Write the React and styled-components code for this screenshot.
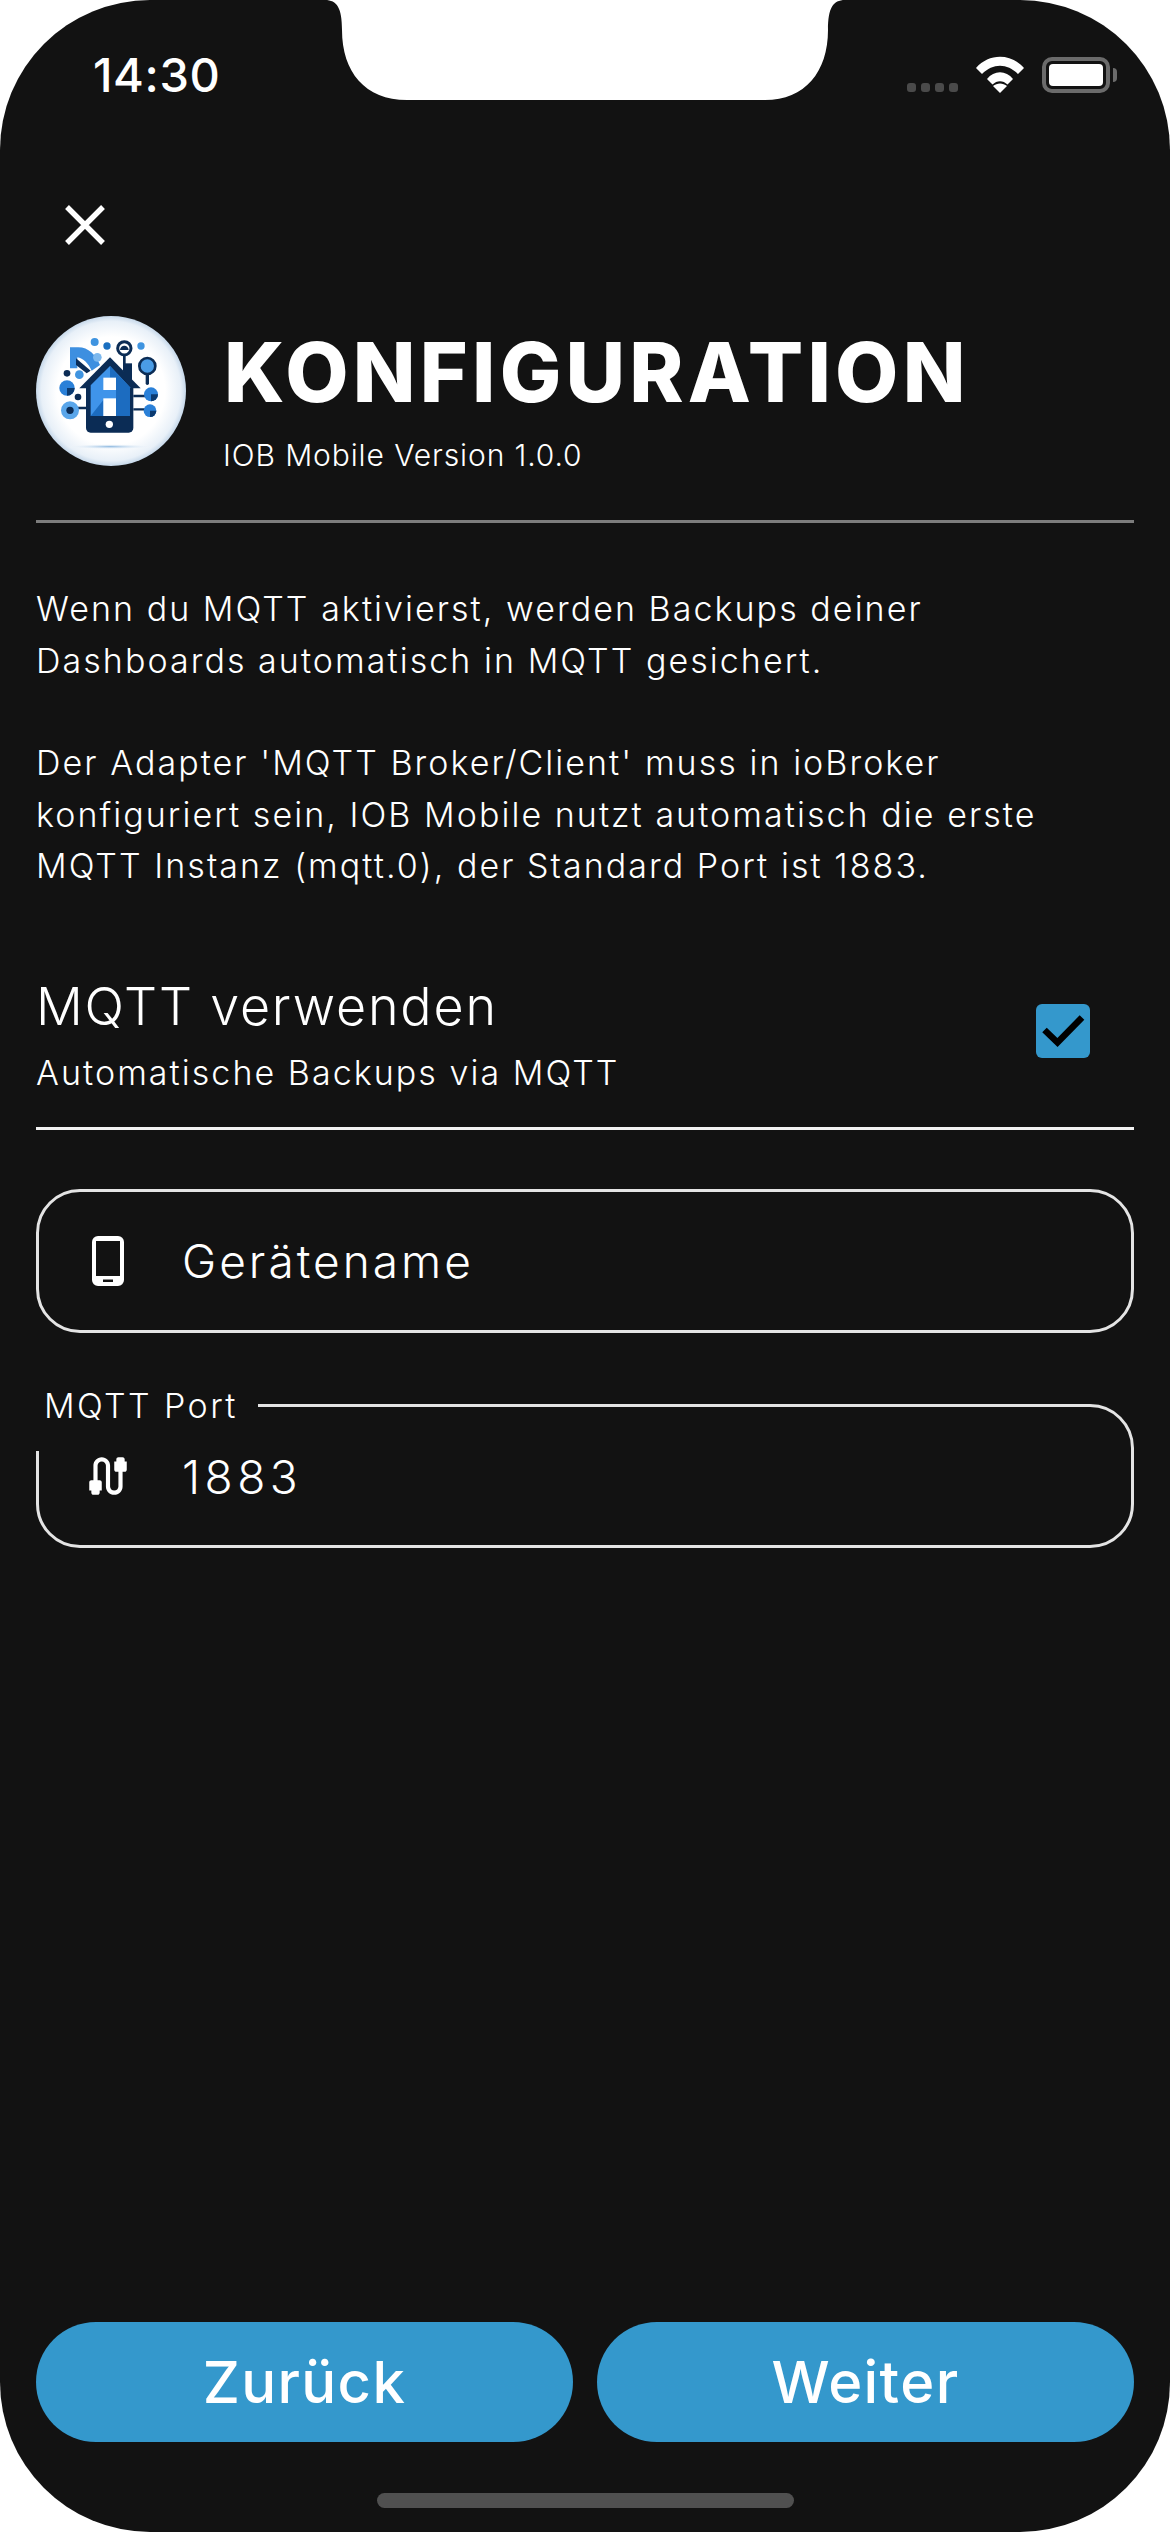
import styled, { createGlobalStyle } from 'styled-components';
import { MdCable } from 'react-icons/md';

const GlobalStyle = createGlobalStyle`
  html, body {
    margin: 0;
    padding: 0;
    background: #fff;
  }
  * {
    box-sizing: border-box;
  }
`;

const Screen = styled.div`
  position: relative;
  width: 1170px;
  height: 2532px;
  display: flex;
  flex-direction: column;
  overflow: hidden;
  border-radius: 150px;
  background: #121212;
  color: #fff;
  font-family: Inter, "Liberation Sans", sans-serif;
`;

const Notch = styled.svg`
  position: absolute;
  top: 0;
  left: 325px;
`;

const StatusBar = styled.div`
  height: 184px;
  flex: none;
  display: flex;
  justify-content: space-between;
  align-items: flex-start;
  padding: 50px 60px 0 93px;
`;

const Time = styled.span`
  font-size: 47px;
  font-weight: 500;
  line-height: 50px;
  letter-spacing: 0.6px;
`;

const StatusIcons = styled.div`
  display: flex;
  align-items: flex-end;
  gap: 17px;
  height: 40px;
  margin-top: 3px;
`;

const Dots = styled.div`
  display: flex;
  gap: 5px;
  margin-bottom: 1px;
`;

const Dot = styled.i`
  width: 9px;
  height: 9px;
  border-radius: 3px;
  background: #4a4a4a;
`;

const Battery = styled.div`
  position: relative;
  width: 68px;
  height: 36px;
  padding: 3px;
  border: 4px solid #6b6b6b;
  border-radius: 10px;
  &::before {
    content: '';
    display: block;
    height: 100%;
    border-radius: 4px;
    background: #fff;
  }
  &::after {
    content: '';
    position: absolute;
    right: -11px;
    top: 7px;
    width: 4px;
    height: 14px;
    border-radius: 0 4px 4px 0;
    background: #6b6b6b;
  }
`;

const Content = styled.div`
  flex: 1;
  display: flex;
  flex-direction: column;
  padding: 0 36px;
`;

const CloseButton = styled.button`
  width: 60px;
  height: 60px;
  margin: 11px 0 0 19px;
  padding: 0;
  flex: none;
  display: flex;
  align-items: center;
  justify-content: center;
  background: none;
  border: 0;
`;

const Header = styled.header`
  display: flex;
  align-items: flex-start;
  gap: 38px;
  margin-top: 61px;
  padding-bottom: 47px;
  border-bottom: 3px solid #7d7d7d;
`;

const TitleBlock = styled.div`
  display: flex;
  flex-direction: column;
`;

const Title = styled.h1`
  margin: 7px 0 0;
  font-size: 82px;
  font-weight: 800;
  line-height: 100px;
  letter-spacing: 4.2px;
`;

const Version = styled.p`
  margin: 14px 0 0 -1px;
  font-size: 30px;
  font-weight: 300;
  line-height: 36px;
  letter-spacing: 0.9px;
`;

const Paragraph = styled.p`
  margin: ${p => (p.$first ? '60px' : '51px')} 0 0;
  font-size: 34px;
  font-weight: 300;
  line-height: 51.6px;
  letter-spacing: 2.05px;
`;

const ToggleRow = styled.div`
  display: flex;
  align-items: center;
  justify-content: space-between;
  margin-top: 83px;
  padding: 0 44px 33px 0;
  border-bottom: 3px solid #f2f2f2;
`;

const ToggleName = styled.div`
  font-size: 52px;
  font-weight: 300;
  line-height: 64px;
  letter-spacing: 1.8px;
`;

const ToggleHint = styled.div`
  margin-top: 13px;
  font-size: 34px;
  font-weight: 300;
  line-height: 42px;
  letter-spacing: 2.05px;
`;

const Checkbox = styled.div`
  width: 54px;
  height: 54px;
  flex: none;
  margin-bottom: 6px;
  border-radius: 6px;
  background: #3498cc;
`;

const Field = styled.div`
  position: relative;
  height: 144px;
  margin-top: ${p => (p.$label ? '71px' : '59px')};
  display: flex;
  align-items: center;
  padding-left: 46px;
  border: 3px solid #e4e4e4;
  border-radius: 44px;
`;

const FieldLabel = styled.label`
  position: absolute;
  left: -3px;
  top: -46px;
  width: 222px;
  height: 90px;
  padding-left: 8px;
  font-size: 34px;
  font-weight: 300;
  line-height: 90px;
  letter-spacing: 2.4px;
  background: #121212;
`;

const FieldIcon = styled.span`
  width: 50px;
  flex: none;
  display: flex;
  justify-content: center;
  margin-left: -2px;
`;

const FieldValue = styled.span`
  margin: ${p => (p.$label ? '2px 0 0 49px' : '0 0 0 49px')};
  font-size: 46px;
  font-weight: 300;
  letter-spacing: ${p => (p.$label ? '4.5px' : '3px')};
`;

const Actions = styled.div`
  margin-top: auto;
  display: grid;
  grid-template-columns: 1fr 1fr;
  gap: 24px;
  padding-bottom: 90px;
`;

const ActionButton = styled.button`
  height: 120px;
  border: 0;
  border-radius: 60px;
  background: #3498cc;
  color: #fff;
  font-family: inherit;
  font-size: 58px;
  font-weight: 450;
  letter-spacing: 1.4px;
`;

const HomeBar = styled.div`
  position: absolute;
  left: 377px;
  bottom: 24px;
  width: 417px;
  height: 15px;
  border-radius: 8px;
  background: #505050;
`;

const Wifi = () => (
  <svg width="50" height="38" viewBox="0 0 50 38">
    <path d="M1 13 C14 -2 36 -2 49 13 L43 19 C32 8 18 8 7 19 Z" fill="#fff" />
    <path d="M12 24 C19 15 31 15 38 24 L32.5 29.5 C28 25 22 25 17.5 29.5 Z" fill="#fff" />
    <path d="M25 38 L18 31 C22 27.5 28 27.5 32 31 Z" fill="#fff" />
  </svg>
);

const CloseIcon = () => (
  <svg width="44" height="44" viewBox="0 0 44 44">
    <path d="M4 4 L40 40 M40 4 L4 40" stroke="#fff" strokeWidth="5.4" fill="none" />
  </svg>
);

const CheckIcon = () => (
  <svg width="54" height="54" viewBox="0 0 54 54">
    <path d="M8.5 26 L21.5 38.5 L46 13.5" stroke="#000" strokeWidth="6.5" fill="none" />
  </svg>
);

const PhoneIcon = () => (
  <svg width="32" height="50" viewBox="0 0 32 50">
    <path
      fillRule="evenodd"
      fill="#fff"
      d="M6 0 H26 A6 6 0 0 1 32 6 V44 A6 6 0 0 1 26 50 H6 A6 6 0 0 1 0 44 V6 A6 6 0 0 1 6 0 Z M4 5 V40 H28 V5 Z M11 43.5 V46 H21 V43.5 Z"
    />
  </svg>
);

// mapped 1:1 from the zoomed crop, hence the odd viewBox
const Logo = () => (
  <svg width="150" height="150" viewBox="48 48 450 450" style={{ flex: 'none' }}>
    <defs>
      <radialGradient id="logoBg">
        <stop offset="0.72" stopColor="#ffffff" />
        <stop offset="0.93" stopColor="#e8f0f8" />
        <stop offset="1" stopColor="#c6d8ea" />
      </radialGradient>
      <radialGradient id="logoShadow">
        <stop offset="0" stopColor="#8db8e0" />
        <stop offset="1" stopColor="#ffffff" stopOpacity="0" />
      </radialGradient>
    </defs>
    <circle cx="273" cy="273" r="225" fill="url(#logoBg)" />
    <ellipse cx="270" cy="440" rx="135" ry="8" fill="url(#logoShadow)" />
    <path d="M150 142 H175 C205 142 228 165 240 195 L215 212 C205 190 190 175 172 172 V205 H150 Z" fill="#3d8fe0" />
    <path d="M168 175 L212 212 L200 220 L168 195 Z" fill="#0b2c55" />
    <circle cx="232" cy="172" r="13" fill="#7cb8ee" />
    <circle cx="224" cy="126" r="12" fill="#3f94e0" />
    <circle cx="261" cy="138" r="11" fill="#1a6fc0" />
    <circle cx="363" cy="138" r="11" fill="#3f94e0" />
    <circle cx="141" cy="220" r="10" fill="#0b2c55" />
    <circle cx="178" cy="224" r="13" fill="#3f94e0" />
    <circle cx="141" cy="264" r="23" fill="#2a80d8" />
    <path d="M141 264 V287 A23 23 0 0 0 164 264 Z" fill="#0b3a70" />
    <circle cx="174" cy="291" r="10" fill="#0b2c55" />
    <path d="M170 324 H205 M340 288 H380 M340 328 H380" stroke="#0b2c55" strokeWidth="7" />
    <circle cx="150" cy="331" r="27" fill="#5aa6ea" />
    <circle cx="150" cy="331" r="11" fill="#0b2c55" />
    <circle cx="393" cy="283" r="21" fill="#2a80d8" />
    <path d="M393 283 H414 A21 21 0 0 1 393 304 Z" fill="#0b3a70" />
    <circle cx="390" cy="332" r="19" fill="#2a80d8" />
    <path d="M390 332 H409 A19 19 0 0 1 390 351 Z" fill="#0b3a70" />
    <path d="M382 225 V250" stroke="#0b2c55" strokeWidth="10" strokeLinecap="round" />
    <circle cx="382" cy="198" r="24" fill="#4a9ce6" stroke="#0b2c55" strokeWidth="8" />
    <path d="M313 165 V215" stroke="#0b2c55" strokeWidth="8" />
    <circle cx="313" cy="145" r="20" fill="#fff" stroke="#0b2c55" strokeWidth="9" />
    <path d="M300 150 A13 13 0 0 1 326 150 Z" fill="#0b2c55" />
    <rect x="312" y="190" width="24" height="50" fill="#0b2c55" />
    <rect x="198" y="250" width="142" height="148" rx="14" fill="#0b2c55" />
    <path d="M270 172 L362 265 H178 Z" fill="#0b2c55" />
    <path d="M270 198 L330 262 V348 H212 V256 Z" fill="#3f94ea" />
    <path d="M270 198 L330 262 V348 H288 V233 H270 Z" fill="#1c6cc0" />
    <path d="M212 348 L250 300 V348 Z" fill="#1c6cc0" />
    <rect x="250" y="233" width="38" height="37" fill="#fff" />
    <rect x="250" y="295" width="38" height="53" fill="#fff" />
    <circle cx="268" cy="373" r="11" fill="#fff" />
  </svg>
);

const App = () => (
  <Screen>
    <GlobalStyle />
    <Notch width="520" height="100" viewBox="0 0 520 100">
      <path
        d="M0 0 C12 0 17 8 17 30 C17 72 40 100 82 100 H440 C480 100 503 72 503 30 C503 8 508 0 520 0 Z"
        fill="#fff"
      />
    </Notch>
    <StatusBar>
      <Time>14:30</Time>
      <StatusIcons>
        <Dots>
          <Dot />
          <Dot />
          <Dot />
          <Dot />
        </Dots>
        <Wifi />
        <Battery />
      </StatusIcons>
    </StatusBar>
    <Content>
      <CloseButton aria-label="Schließen">
        <CloseIcon />
      </CloseButton>
      <Header>
        <Logo />
        <TitleBlock>
          <Title>KONFIGURATION</Title>
          <Version>IOB Mobile Version 1.0.0</Version>
        </TitleBlock>
      </Header>
      <Paragraph $first>
        Wenn du MQTT aktivierst, werden Backups deiner
        <br />
        Dashboards automatisch in MQTT gesichert.
      </Paragraph>
      <Paragraph>
        Der Adapter 'MQTT Broker/Client' muss in ioBroker
        <br />
        konfiguriert sein, IOB Mobile nutzt automatisch die erste
        <br />
        MQTT Instanz (mqtt.0), der Standard Port ist 1883.
      </Paragraph>
      <ToggleRow>
        <div>
          <ToggleName>MQTT verwenden</ToggleName>
          <ToggleHint>Automatische Backups via MQTT</ToggleHint>
        </div>
        <Checkbox>
          <CheckIcon />
        </Checkbox>
      </ToggleRow>
      <Field>
        <FieldIcon>
          <PhoneIcon />
        </FieldIcon>
        <FieldValue>Gerätename</FieldValue>
      </Field>
      <Field $label>
        <FieldLabel>MQTT Port</FieldLabel>
        <FieldIcon $label>
          <MdCable size={64} color="#fff" />
        </FieldIcon>
        <FieldValue $label>1883</FieldValue>
      </Field>
      <Actions>
        <ActionButton>Zurück</ActionButton>
        <ActionButton>Weiter</ActionButton>
      </Actions>
    </Content>
    <HomeBar />
  </Screen>
);

export default App;
